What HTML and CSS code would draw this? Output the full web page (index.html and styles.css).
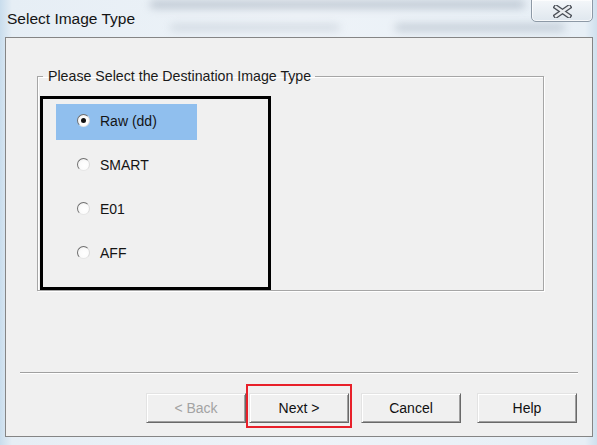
FILE: index.html
```html
<!DOCTYPE html>
<html lang="en">
<head>
<meta charset="utf-8">
<title>Select Image Type</title>
<link rel="stylesheet" href="styles.css">
</head>
<body>
<div class="window">
  <div class="titlebar">
    <div class="glass" aria-hidden="true">
      <span class="smudge s1"></span>
      <span class="smudge s2"></span>
      <span class="smudge s3"></span>
    </div>
    <span class="title">Select Image Type</span>
    <button class="close" type="button" aria-label="Close">
      <svg width="19" height="13" viewBox="0 0 19 13">
        <path d="M3 2 L16 11 M16 2 L3 11" stroke="#4a4f57" stroke-width="5" stroke-linecap="square"/>
        <path d="M3 2 L16 11 M16 2 L3 11" stroke="#e9ecef" stroke-width="2.4" stroke-linecap="square"/>
      </svg>
    </button>
  </div>
  <div class="client">
    <fieldset class="group">
      <legend>Please Select the Destination Image Type</legend>
      <div class="options">
        <label class="option selected"><span class="radio checked"></span>Raw (dd)</label>
        <label class="option"><span class="radio"></span>SMART</label>
        <label class="option"><span class="radio"></span>E01</label>
        <label class="option"><span class="radio"></span>AFF</label>
      </div>
    </fieldset>
    <div class="sep"></div>
    <div class="buttons">
      <button class="btn disabled" type="button">&lt; Back</button>
      <span class="next-wrap">
        <button class="btn next" type="button">Next &gt;</button>
        <span class="mark" aria-hidden="true"></span>
      </span>
      <button class="btn cancel" type="button">Cancel</button>
      <button class="btn help" type="button">Help</button>
    </div>
  </div>
</div>
</body>
</html>
```

FILE: styles.css
```css
* { box-sizing: border-box; }

html, body {
  margin: 0;
  padding: 0;
}

body {
  width: 597px;
  height: 445px;
  overflow: hidden;
  font-family: "Liberation Sans", Arial, sans-serif;
  background: linear-gradient(90deg, #c9dded 0px, #e6eef5 12px, #eef3f8 300px, #e7eff6 585px, #cfe0ee 597px);
}

.window {
  width: 597px;
  height: 445px;
  display: flex;
  flex-direction: column;
  padding: 0 4px 0 5px;
}

.titlebar {
  position: relative;
  height: 37px;
  flex: none;
  display: flex;
  align-items: flex-start;
  justify-content: space-between;
}

.glass {
  position: absolute;
  inset: 0 -4px 0 -5px;
  overflow: hidden;
  pointer-events: none;
}

.smudge {
  position: absolute;
  display: block;
  height: 7px;
  border-radius: 4px;
  background: #8e9bab;
  filter: blur(4px);
  opacity: 0.55;
}
.s1 { left: 150px; top: 1px; width: 375px; }
.s2 { left: 395px; top: 24px; width: 170px; opacity: 0.45; }
.s3 { left: 170px; top: 24px; width: 170px; opacity: 0.28; }

.title {
  position: relative;
  margin: 10px 0 0 2px;
  font-size: 15.5px;
  line-height: 18px;
  color: #141414;
}

.close {
  position: relative;
  width: 62px;
  height: 23px;
  margin: -1px 0 0 0;
  padding: 0;
  border: 1px solid #8d99a6;
  border-radius: 0 0 5px 5px;
  background: linear-gradient(#f4f7fa, #dfe7ee);
  box-shadow: inset 0 0 0 1px rgba(255, 255, 255, 0.7);
  display: flex;
  align-items: center;
  justify-content: center;
}
.close svg { display: block; margin-top: 1px; }

.client {
  width: 588px;
  height: 400px;
  flex: none;
  border: 1px solid #858585;
  background: #f0f0f0;
  display: flex;
  flex-direction: column;
}

.group {
  width: 507px;
  min-width: 0;
  margin: 30px 0 0 31px;
  padding: 12px 0 0 2px;
  border: 1px solid #a6a6a6;
  box-shadow: 1px 1px 0 #ffffff, inset 1px 1px 0 #ffffff;
}

.group legend {
  margin-left: 3px;
  padding: 0 4px 0 5px;
  font-size: 14.2px;
  line-height: 16px;
  color: #1a1a1a;
}

.options {
  width: 231px;
  height: 194px;
  border: 3px solid #000;
  padding: 5px 0 0 13px;
  display: flex;
  flex-direction: column;
  gap: 8px;
}

.option {
  width: 141px;
  height: 36px;
  flex: none;
  display: flex;
  align-items: center;
  gap: 10px;
  padding: 0 0 3px 21px;
  font-size: 14px;
  color: #141414;
}
.option.selected { background: #90bfee; }

.radio {
  width: 13px;
  height: 13px;
  flex: none;
  border-radius: 50%;
  border: 1px solid;
  border-color: #6f6f6f #dadada #e6e6e6 #6f6f6f;
  background: radial-gradient(circle at 60% 60%, #ffffff 0, #fbfbfb 50%, #e9e9e9 100%);
  display: flex;
  align-items: center;
  justify-content: center;
}
.radio.checked::after {
  content: "";
  width: 5px;
  height: 5px;
  border-radius: 50%;
  background: #111;
}

.sep {
  height: 2px;
  margin: 81px 14px 0 14px;
  border-top: 1px solid #a0a0a0;
  border-bottom: 1px solid #ffffff;
}

.buttons {
  display: flex;
  margin-top: 19px;
  padding-left: 140px;
}

.btn {
  width: 100px;
  height: 30px;
  padding: 0 0 1px 0;
  font-family: "Liberation Sans", Arial, sans-serif;
  font-size: 14px;
  color: #111;
  background: #f0f0f0;
  border: 1px solid;
  border-color: #e3e3e3 #696969 #696969 #e3e3e3;
  box-shadow: inset 1px 1px 0 #ffffff, inset -1px -1px 0 #a0a0a0;
}
.btn.disabled { color: #a3a3a3; }

.next-wrap {
  position: relative;
  display: block;
  margin-left: 3px;
}

.mark {
  position: absolute;
  left: -3px;
  right: -3px;
  top: -9px;
  bottom: -5px;
  border: 2px solid #e8202a;
}

.cancel { margin-left: 12px; }
.help { margin-left: 16px; }
```
